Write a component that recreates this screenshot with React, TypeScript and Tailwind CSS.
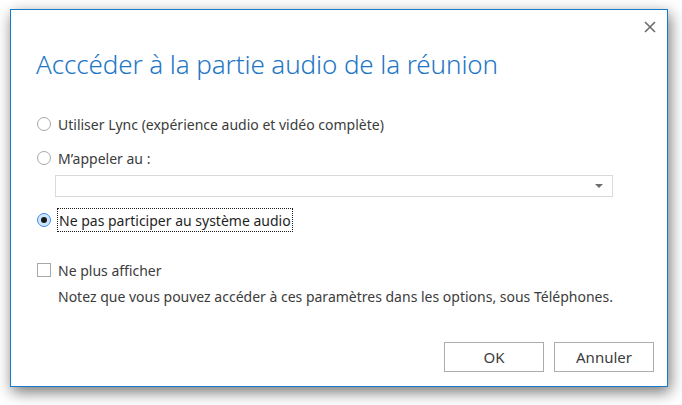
import * as React from 'react';

function Radio({ checked = false }: { checked?: boolean }) {
  if (checked) {
    return (
      <span className="flex h-[14px] w-[14px] shrink-0 items-center justify-center rounded-full border border-[#3d8ee0] bg-[#cfe6fa]">
        <span className="h-[6px] w-[6px] rounded-full bg-[#1a1a1a]" />
      </span>
    );
  }
  return <span className="h-[14px] w-[14px] shrink-0 rounded-full border border-[#a8a8a8] bg-white" />;
}

export default function App() {
  return (
    <div className="h-[405px] w-[682px] overflow-hidden bg-white pl-[10px] pt-[9px] font-['Noto_Sans',sans-serif] text-[#3c3c3c]">
      <div className="relative flex h-[378px] w-[658px] flex-col border border-[#1979ca] bg-white shadow-[2px_5px_14px_rgba(0,0,0,0.55)]">
        <button className="absolute right-[11px] top-[11px] flex h-[12px] w-[12px] items-center justify-center">
          <svg width="12" height="12" viewBox="0 0 12 12">
            <path d="M1 1L11 11M11 1L1 11" stroke="#6b6b6b" strokeWidth="1.6" />
          </svg>
        </button>

        <h1 className="ml-[25px] mt-[37px] text-[26px] font-light leading-[34px] tracking-[-0.1px] text-[#1e77c6]">
          Acccéder à la partie audio de la réunion
        </h1>

        <div className="ml-[26px] mt-[33px] flex flex-col text-[14px]">
          <label className="flex h-[20px] items-center gap-[7px]">
            <Radio />
            <span>Utiliser Lync (expérience audio et vidéo complète)</span>
          </label>
          <label className="mt-[14px] flex h-[20px] items-center gap-[7px]">
            <Radio />
            <span>M’appeler au :</span>
          </label>
          <div className="ml-[18px] mt-[7px] flex h-[22px] w-[558px] items-center justify-end border border-[#d9d9d9] bg-white pr-[9px]">
            <svg width="8" height="4" viewBox="0 0 8 4">
              <path d="M0 0H8L4 4Z" fill="#6e6e6e" />
            </svg>
          </div>
          <label className="mt-[11px] flex h-[24px] items-center gap-[6px]">
            <Radio checked />
            <span className="flex h-[24px] items-center border border-dotted border-[#1a1a1a] px-[1px] text-[#1f1f1f]">
              Ne pas participer au système audio
            </span>
          </label>

          <label className="mt-[28px] flex h-[20px] items-center gap-[7px]">
            <span className="h-[14px] w-[14px] shrink-0 border border-[#a8a8a8] bg-white" />
            <span>Ne plus afficher</span>
          </label>
          <p className="ml-[21px] mt-[7px] leading-[20px]">
            Notez que vous pouvez accéder à ces paramètres dans les options, sous Téléphones.
          </p>
        </div>

        <div className="mr-[13px] mt-auto mb-[14px] flex justify-end gap-[10px] text-[15px]">
          <button className="h-[30px] w-[100px] border border-[#acacac] bg-white">OK</button>
          <button className="h-[30px] w-[100px] border border-[#acacac] bg-white">Annuler</button>
        </div>
      </div>
    </div>
  );
}
